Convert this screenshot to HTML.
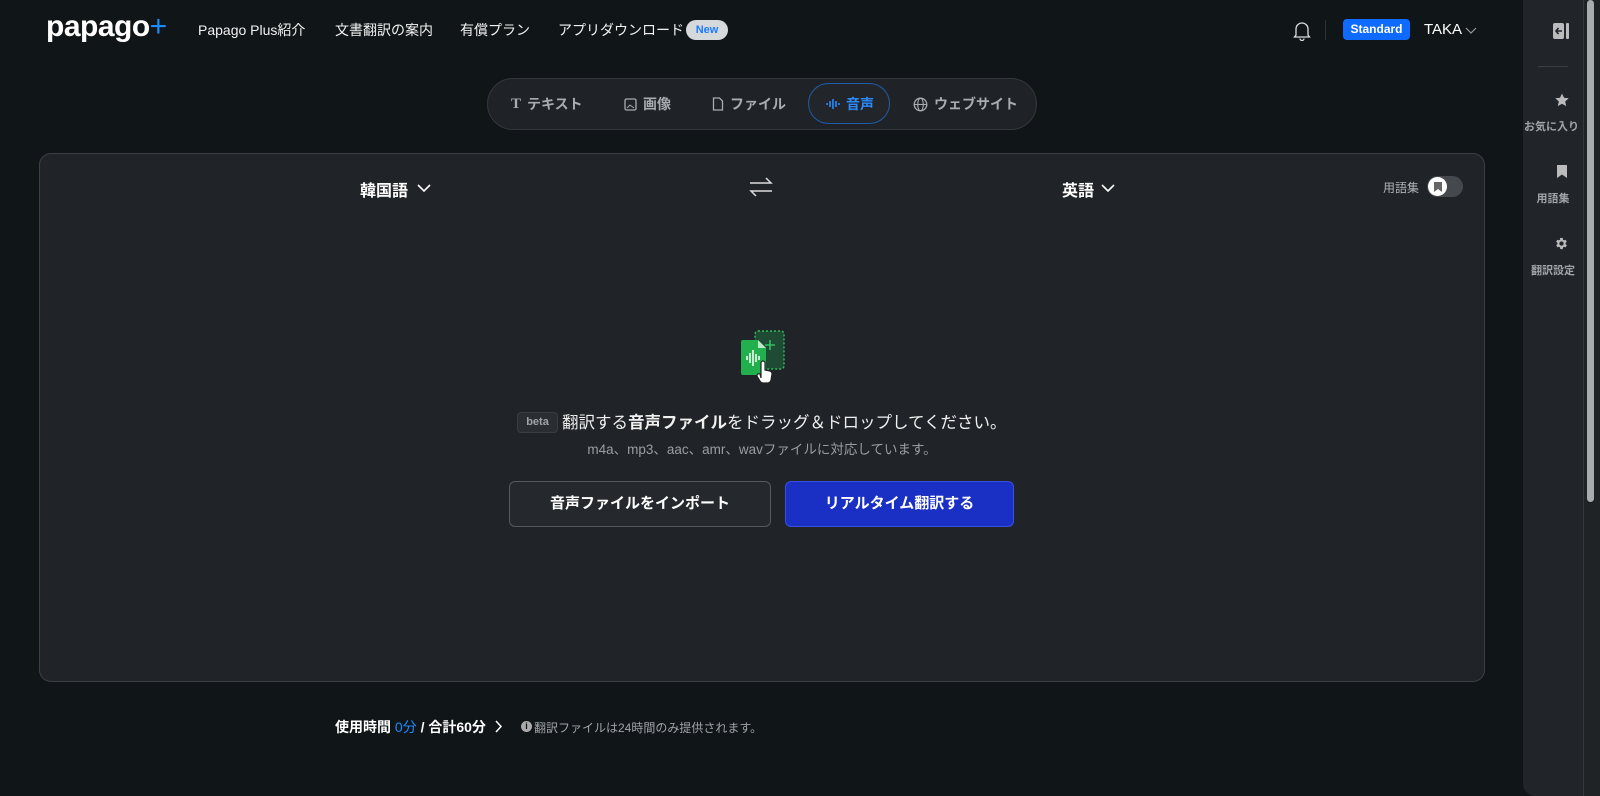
<!DOCTYPE html>
<html><head><meta charset="utf-8"><style>
*{margin:0;padding:0;box-sizing:border-box}
body{width:1600px;height:796px;background:#101518;font-family:"Liberation Sans","Noto Sans CJK JP",sans-serif;color:#fff;position:relative;overflow:hidden}
.a{position:absolute;white-space:nowrap}
.nav{font-size:14px;top:20px;color:#f2f2f2}
.tab{font-size:14px;font-weight:bold;color:#a8acb0;top:94px;display:flex;align-items:center;gap:6px}
.side{font-size:11px;color:#a0a4a8;font-weight:bold;width:60px;text-align:center;left:1523px}
</style></head><body>
<div class="a" style="left:46px;top:10px;font-size:30px;font-weight:bold;letter-spacing:-0.5px;color:#fff">papago<span style="color:#1a8cff;font-weight:normal">+</span></div>
<div class="a nav" style="left:198px">Papago Plus紹介</div>
<div class="a nav" style="left:335px">文書翻訳の案内</div>
<div class="a nav" style="left:460px">有償プラン</div>
<div class="a nav" style="left:558px">アプリダウンロード</div>
<div class="a" style="left:686px;top:20px;width:42px;height:20px;border-radius:10px;background:#d6d9dc;color:#1a7cff;font-size:11px;font-weight:bold;text-align:center;line-height:20px">New</div>
<svg class="a" style="left:1293px;top:21px" width="18" height="20" viewBox="0 0 18 20"><path d="M3 14V8a6 6 0 0 1 12 0v6l1.5 2h-15z M7 17.5a2 2 0 0 0 4 0" fill="none" stroke="#ddd" stroke-width="1.3"/></svg>
<div class="a" style="left:1325px;top:20px;width:1px;height:20px;background:#2e3236"></div>
<div class="a" style="left:1343px;top:19px;width:67px;height:21px;border-radius:4px;background:#0f6bff;font-size:12px;font-weight:bold;text-align:center;line-height:21px">Standard</div>
<div class="a" style="left:1424px;top:21px;font-size:15px">TAKA</div>
<svg class="a" style="left:1465px;top:27px" width="12" height="8"><path d="M1 1l5 5 5-5" fill="none" stroke="#999" stroke-width="1.2"/></svg>
<div class="a" style="left:487px;top:78px;width:550px;height:52px;border-radius:26px;background:#1f2327;border:1px solid #34383c"></div>
<div class="a" style="left:808px;top:83px;width:82px;height:41px;border-radius:21px;border:1px solid #1f5ca8;background:#22262a"></div>
<div class="a tab" style="left:511px"><span style="font-family:'Liberation Serif';font-size:15px">T</span>テキスト</div>
<div class="a tab" style="left:624px"><svg width="13" height="13"><rect x="1" y="1" width="11" height="11" rx="1.5" fill="none" stroke="#a8acb0" stroke-width="1.3"/><path d="M3 10l3-3 4 3" fill="none" stroke="#a8acb0"/></svg>画像</div>
<div class="a tab" style="left:712px"><svg width="12" height="14"><path d="M1.5 1h6l3 3v9h-9z" fill="none" stroke="#a8acb0" stroke-width="1.3"/></svg>ファイル</div>
<div class="a tab" style="left:826px;color:#2b8bff"><svg width="14" height="12"><path d="M1 5v2M4 3v6M7 1v10M10 3v6M13 5v2" stroke="#2b8bff" stroke-width="1.6"/></svg>音声</div>
<div class="a tab" style="left:913px"><svg width="15" height="15" viewBox="0 0 15 15"><circle cx="7.5" cy="7.5" r="6.3" fill="none" stroke="#a8acb0" stroke-width="1.3"/><ellipse cx="7.5" cy="7.5" rx="2.8" ry="6.3" fill="none" stroke="#a8acb0" stroke-width="1.1"/><path d="M1.2 7.5h12.6" stroke="#a8acb0" stroke-width="1.1"/></svg>ウェブサイト</div>
<div class="a" style="left:39px;top:153px;width:1446px;height:529px;border-radius:12px;background:#202327;border:1px solid #3c4044"></div>
<div class="a" style="left:360px;top:177px;font-size:16px;font-weight:bold">韓国語</div>
<svg class="a" style="left:417px;top:184px" width="14" height="9"><path d="M1 1l6 6 6-6" fill="none" stroke="#fff" stroke-width="1.6"/></svg>
<svg class="a" style="left:749px;top:177px" width="24" height="20"><path d="M1 6h21l-5-5M23 14H2l5 5" fill="none" stroke="#ddd" stroke-width="1.5"/></svg>
<div class="a" style="left:1062px;top:177px;font-size:16px;font-weight:bold">英語</div>
<svg class="a" style="left:1101px;top:184px" width="14" height="9"><path d="M1 1l6 6 6-6" fill="none" stroke="#fff" stroke-width="1.6"/></svg>
<div class="a" style="left:1383px;top:179px;font-size:12px;color:#b0b4b8">用語集</div>
<div class="a" style="left:1427px;top:176px;width:36px;height:21px;border-radius:11px;background:#45494d"></div>
<div class="a" style="left:1428px;top:177px;width:19px;height:19px;border-radius:50%;background:#fff"></div>
<svg class="a" style="left:1434px;top:182px" width="8" height="10"><path d="M0 0h8v10l-4-3-4 3z" fill="#666"/></svg>
<svg class="a" style="left:740px;top:328px" width="50" height="62" viewBox="0 0 50 62"><rect x="15" y="3" width="29" height="38" rx="3" fill="#1f4a33" stroke="#2fbf5f" stroke-width="1.4" stroke-dasharray="2 2"/><path d="M30 12v10M25 17h10" stroke="#2fbf5f" stroke-width="1.6"/><path d="M3 12h15l8 8v25a2 2 0 0 1-2 2H3a2 2 0 0 1-2-2V14a2 2 0 0 1 2-2z" fill="#22b04f"/><path d="M18 12v8h8z" fill="#bfe8cb"/><path d="M7 28v4M10 25v10M13 22v16M16 26v8M19 28v4" stroke="#fff" stroke-width="1.5"/><path d="M21 50v-15a2 2 0 0 1 4 0v7l5 1a3 3 0 0 1 2 3l-1 6a4 4 0 0 1-4 3h-4a4 4 0 0 1-3-2l-3-5a2 2 0 0 1 3-2z" fill="#fff" stroke="#222" stroke-width="1.2"/></svg>
<div class="a" style="left:517px;top:412px;width:41px;height:21px;border-radius:4px;background:#2a2e32;border:1px solid #3a3e42;font-size:11px;color:#a0a4a8;font-weight:bold;text-align:center;line-height:19px">beta</div>
<div class="a" style="left:562px;top:409px;font-size:16.5px;color:#f0f0f0">翻訳する<b>音声ファイル</b>をドラッグ＆ドロップしてください。</div>
<div class="a" style="left:0;width:1524px;text-align:center;top:438px;font-size:13.5px;color:#9a9ea2">m4a、mp3、aac、amr、wavファイルに対応しています。</div>
<div class="a" style="left:509px;top:481px;width:262px;height:46px;border-radius:6px;background:#25282c;border:1px solid #55595d;font-size:15px;font-weight:bold;text-align:center;line-height:44px">音声ファイルをインポート</div>
<div class="a" style="left:785px;top:481px;width:229px;height:46px;border-radius:6px;background:#1a2fc4;border:1px solid #3a50e0;font-size:15px;font-weight:bold;text-align:center;line-height:44px">リアルタイム翻訳する</div>
<div class="a" style="left:335px;top:717px;font-size:14px;font-weight:bold">使用時間 <span style="color:#1a8cff;font-weight:normal">0分</span> / 合計60分</div>
<svg class="a" style="left:495px;top:720px" width="8" height="13"><path d="M1 1l5 5.5-5 5.5" fill="none" stroke="#fff" stroke-width="1.5"/></svg>
<div class="a" style="left:521px;top:721px;width:11px;height:11px;border-radius:50%;background:#aaa;color:#101518;font-size:9px;font-weight:bold;text-align:center;line-height:11px">i</div>
<div class="a" style="left:534px;top:719px;font-size:12px;color:#a0a4a8">翻訳ファイルは24時間のみ提供されます。</div>
<div class="a" style="left:1523px;top:0;width:60px;height:796px;background:#212428;border-radius:0 0 0 12px;overflow:hidden"></div>
<div class="a" style="left:1583px;top:0;width:17px;height:796px;background:#202326;border-left:1px solid #35383c"></div>
<div class="a" style="left:1587px;top:0;width:7px;height:502px;border-radius:4px;background:#a9acaf"></div>
<svg class="a" style="left:1552px;top:22px" width="18" height="18"><rect x="1" y="1" width="11" height="16" rx="2" fill="#bbb"/><rect x="14" y="1" width="3" height="16" rx="1" fill="#bbb"/><path d="M10 9H4M6.5 6L4 9l2.5 3" stroke="#212428" stroke-width="1.6" fill="none"/></svg>
<div class="a" style="left:1538px;top:66px;width:30px;height:1px;background:#3a3e42"></div>
<svg class="a" style="left:1555px;top:93px" width="14" height="14" viewBox="0 0 14 14"><path d="M7 .5l2 4.3 4.7.5-3.5 3.2 1 4.6L7 10.8 2.8 13.1l1-4.6L.3 5.3 5 4.8z" fill="#bbb"/></svg>
<div class="a" style="left:1523px;top:118px;width:60px;overflow:hidden;height:16px"><div class="side" style="position:absolute;left:-3px;width:70px;text-align:left;padding-left:4px">お気に入り</div></div>
<svg class="a" style="left:1557px;top:165px" width="10" height="13"><path d="M0 0h10v13l-5-3.5-5 3.5z" fill="#bbb"/></svg>
<div class="a side" style="top:190px">用語集</div>
<svg class="a" style="left:1554px;top:236px" width="15" height="15" viewBox="0 0 24 24"><path fill="#bbb" d="M19.4 13a7.5 7.5 0 0 0 0-2l2.1-1.6-2-3.5-2.5 1a7 7 0 0 0-1.7-1L15 3h-4l-.4 2.9a7 7 0 0 0-1.7 1l-2.5-1-2 3.5L6.6 11a7.5 7.5 0 0 0 0 2l-2.1 1.6 2 3.5 2.5-1a7 7 0 0 0 1.7 1L11 21h4l.4-2.9a7 7 0 0 0 1.7-1l2.5 1 2-3.5zM13 15.5a3.5 3.5 0 1 1 0-7 3.5 3.5 0 0 1 0 7z" transform="translate(-1 0)"/></svg>
<div class="a side" style="top:262px">翻訳設定</div>
</body></html>
